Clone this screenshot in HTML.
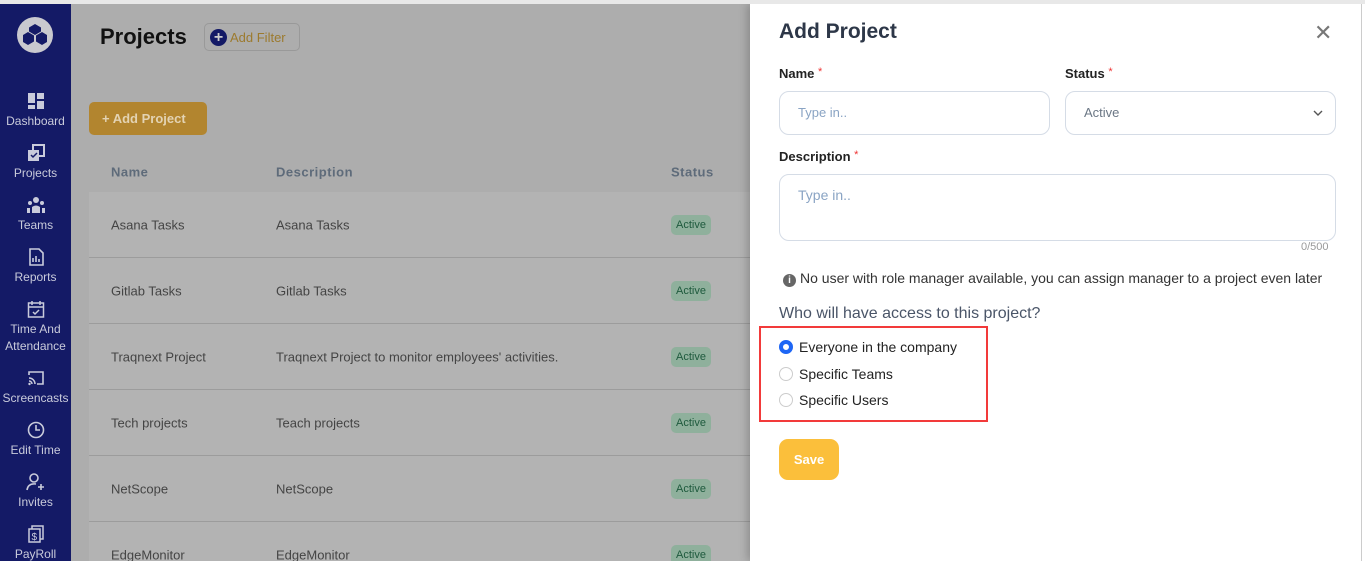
<!DOCTYPE html>
<html style="width:1365px;height:561px;overflow:hidden"><head><meta charset="utf-8"><style>
*{box-sizing:border-box;margin:0;padding:0}
body{width:1365px;height:561px;overflow:hidden;font-family:"Liberation Sans",sans-serif;background:#adadad;position:relative}
.top{position:absolute;left:0;top:0;width:1365px;height:4px;background:#e8e8e8;z-index:5}
.side{position:absolute;left:0;top:4px;width:71px;height:557px;background:#141a66;color:#c9cbdb;text-align:center;font-size:12px}
.logo{position:absolute;left:17px;top:13px;width:36px;height:36px;border-radius:50%;background:#c9c9cf}
.nav{position:absolute;left:0;width:71px;text-align:center;line-height:17px}
.nav svg{display:block;margin:0 auto 3px}
.main{position:absolute;left:71px;top:4px;width:680px;height:557px;overflow:hidden}
h1{position:absolute;left:29px;top:20px;font-size:22px;color:#111;font-weight:bold}
.filter{position:absolute;left:133px;top:19px;width:96px;height:28px;border:1px solid #999;border-radius:5px;font-size:13px;color:#9c7a2e;padding:6px 0 0 25px}
.filter i{position:absolute;left:5px;top:5px;width:17px;height:17px;border-radius:50%;background:#141a66;color:#ccc;font-style:normal;font-size:16px;line-height:17px;text-align:center;font-weight:bold}
.addp{position:absolute;left:18px;top:98px;width:118px;height:33px;background:#b2852f;border-radius:5px;color:#e3d3b3;font-size:13px;font-weight:bold;padding:9px 0 0 13px}
.table{position:absolute;left:18px;top:147px;width:680px;height:420px;background:#b3b3b3;border-radius:6px}
.th{height:41px;background:#adadad;border-radius:6px 6px 0 0;font-size:13px;color:#5e6b7a;font-weight:bold;letter-spacing:.5px;position:relative}
.row{height:66px;border-bottom:1px solid #9c9c9c;position:relative;font-size:13px;color:#444}
.c1,.c2,.c3{position:absolute;top:50%;transform:translateY(-50%)}
.c1{left:22px}.c2{left:187px}.c3{left:582px}
.badge{background:#8fb09c;color:#1e5a3d;font-size:11px;padding:4px 5px;border-radius:5px}
.drawer{position:absolute;left:750px;top:4px;width:611px;height:557px;background:#fff;box-shadow:-3px 0 8px rgba(0,0,0,.2)}
.rb{position:absolute;left:1361px;top:4px;width:4px;height:557px;background:#fff;border-left:1px solid #ccc}
.d{position:absolute;color:#222}
.lbl{font-size:13px;color:#222;font-weight:bold}
.lbl b{color:#e33;font-weight:normal;font-size:11px;vertical-align:top}
.inp{position:absolute;border:1px solid #d5dce6;border-radius:10px;font-size:13px;color:#8aa4c4;padding:0 18px}
.rad{font-size:14px;color:#222}
</style></head><body>
<div class="top"></div>
<div class="side">
<div class="logo"><svg width="36" height="36" viewBox="0 0 36 36"><path d="M18 8l6 3.5v4l-6 3.5-6-3.5v-4zM11 16l6 3.5v6l-6 3.5-5-3v-7zM25 16l5 3v7l-5 3-6-3.5v-6z" fill="#141a66" transform="translate(0,-1)"/></svg></div>
<div class="nav" style="top:88px"><svg width="18" height="18"><rect x="1" y="1" width="7" height="10" fill="#c9cbdb"/><rect x="10" y="1" width="7" height="6" fill="#c9cbdb"/><rect x="1" y="13" width="7" height="4" fill="#c9cbdb"/><rect x="10" y="9" width="7" height="8" fill="#c9cbdb"/></svg>Dashboard</div>
<div class="nav" style="top:140px"><svg width="18" height="18"><rect x="6" y="1" width="11" height="11" fill="none" stroke="#c9cbdb" stroke-width="2"/><rect x="1" y="6" width="11" height="11" fill="#c9cbdb"/><path d="M4 11l2 2 4-4" stroke="#141a66" fill="none" stroke-width="1.5"/></svg>Projects</div>
<div class="nav" style="top:192px"><svg width="20" height="18"><circle cx="10" cy="4" r="3" fill="#c9cbdb"/><circle cx="4" cy="7" r="2" fill="#c9cbdb"/><circle cx="16" cy="7" r="2" fill="#c9cbdb"/><path d="M6 17v-6q4-3 8 0v6zM1 17v-5h3v5zM16 17v-5h3v5z" fill="#c9cbdb"/></svg>Teams</div>
<div class="nav" style="top:244px"><svg width="18" height="18"><path d="M3 1h9l4 4v12h-13z" fill="none" stroke="#c9cbdb" stroke-width="1.6"/><path d="M6 14v-4M9 14v-6M12 14v-3" stroke="#c9cbdb" stroke-width="1.6"/></svg>Reports</div>
<div class="nav" style="top:296px"><svg width="18" height="18"><rect x="1.5" y="3" width="15" height="14" fill="none" stroke="#c9cbdb" stroke-width="1.5"/><path d="M1.5 7h15M5 1v4M13 1v4M6 12l2 2 4-4" stroke="#c9cbdb" fill="none" stroke-width="1.5"/></svg>Time And<br>Attendance</div>
<div class="nav" style="top:365px"><svg width="18" height="18"><path d="M2 6v-3h14v12h-6" fill="none" stroke="#c9cbdb" stroke-width="1.6"/><path d="M2 9a6 6 0 0 1 6 6M2 12a3 3 0 0 1 3 3" fill="none" stroke="#c9cbdb" stroke-width="1.5"/><circle cx="2.5" cy="15" r="1.2" fill="#c9cbdb"/></svg>Screencasts</div>
<div class="nav" style="top:417px"><svg width="18" height="18"><circle cx="9" cy="9" r="7.5" fill="none" stroke="#c9cbdb" stroke-width="1.6"/><path d="M9 4v5h4" stroke="#c9cbdb" fill="none" stroke-width="1.6"/></svg>Edit Time</div>
<div class="nav" style="top:469px"><svg width="20" height="18"><circle cx="8" cy="5" r="4" fill="none" stroke="#c9cbdb" stroke-width="1.6"/><path d="M1 17q1-7 9-6M15 11v6M12 14h6" stroke="#c9cbdb" fill="none" stroke-width="1.6"/></svg>Invites</div>
<div class="nav" style="top:521px"><svg width="18" height="18"><rect x="5" y="1" width="11" height="13" fill="none" stroke="#c9cbdb" stroke-width="1.5"/><rect x="2" y="4" width="11" height="13" fill="#141a66" stroke="#c9cbdb" stroke-width="1.5"/><text x="4.5" y="15" font-size="10" fill="#c9cbdb" font-family="Liberation Sans">$</text></svg>PayRoll</div>
</div>
<div class="main">
<h1>Projects</h1>
<div class="filter"><i>+</i>Add Filter</div>
<div class="addp">+ Add Project</div>
<div class="table">
<div class="th"><span class="c1">Name</span><span class="c2">Description</span><span class="c3">Status</span></div>
<div class="row"><span class="c1">Asana Tasks</span><span class="c2">Asana Tasks</span><span class="c3 badge">Active</span></div>
<div class="row"><span class="c1">Gitlab Tasks</span><span class="c2">Gitlab Tasks</span><span class="c3 badge">Active</span></div>
<div class="row"><span class="c1">Traqnext Project</span><span class="c2">Traqnext Project to monitor employees' activities.</span><span class="c3 badge">Active</span></div>
<div class="row"><span class="c1">Tech projects</span><span class="c2">Teach projects</span><span class="c3 badge">Active</span></div>
<div class="row"><span class="c1">NetScope</span><span class="c2">NetScope</span><span class="c3 badge">Active</span></div>
<div class="row"><span class="c1">EdgeMonitor</span><span class="c2">EdgeMonitor</span><span class="c3 badge">Active</span></div>
</div>
</div>
<div class="drawer">
<div class="d" style="left:29px;top:16px;font-size:21px;font-weight:bold;color:#2d3748">Add Project</div>
<div class="d" style="left:564px;top:16px;font-size:22px;color:#777">&#x2715;</div>
<div class="d lbl" style="left:29px;top:62px">Name <b>*</b></div>
<div class="d lbl" style="left:315px;top:62px">Status <b>*</b></div>
<div class="inp" style="left:29px;top:87px;width:271px;height:44px;line-height:42px">Type in..</div>
<div class="inp" style="left:315px;top:87px;width:271px;height:44px;line-height:42px;color:#6b7785">Active<svg style="position:absolute;right:12px;top:17px" width="10" height="8"><path d="M1 2l4 4 4-4" stroke="#555" fill="none" stroke-width="1.4"/></svg></div>
<div class="d lbl" style="left:29px;top:145px">Description <b>*</b></div>
<div class="inp" style="left:29px;top:170px;width:557px;height:67px;padding-top:12px;font-size:14px">Type in..</div>
<div class="d" style="left:551px;top:237px;font-size:11px;color:#999">0/500</div>
<div class="d" style="left:33px;top:266px;font-size:14px;color:#333;white-space:nowrap"><span style="display:inline-block;width:13px;height:13px;border-radius:50%;background:#666;color:#fff;font-size:10px;text-align:center;line-height:13px;font-weight:bold;margin-right:4px">i</span>No user with role manager available, you can assign manager to a project even later</div>
<div class="d" style="left:29px;top:301px;font-size:16px;color:#4a5568">Who will have access to this project?</div>
<div class="d" style="left:9px;top:322px;width:229px;height:96px;border:2px solid #f23a3a"></div>
<div class="d rad" style="left:29px;top:335px"><span style="display:inline-block;width:14px;height:14px;border-radius:50%;border:4px solid #1e66f5;vertical-align:-2px;margin-right:6px"></span>Everyone in the company</div>
<div class="d rad" style="left:29px;top:362px"><span style="display:inline-block;width:14px;height:14px;border-radius:50%;border:1px solid #ccc;vertical-align:-2px;margin-right:6px"></span>Specific Teams</div>
<div class="d rad" style="left:29px;top:388px"><span style="display:inline-block;width:14px;height:14px;border-radius:50%;border:1px solid #ccc;vertical-align:-2px;margin-right:6px"></span>Specific Users</div>
<div class="d" style="left:29px;top:435px;width:60px;height:41px;background:#fbbf3b;border-radius:9px;color:#fff;font-size:13px;font-weight:bold;text-align:center;line-height:41px">Save</div>
</div>
<div class="rb"></div>
</body></html>
